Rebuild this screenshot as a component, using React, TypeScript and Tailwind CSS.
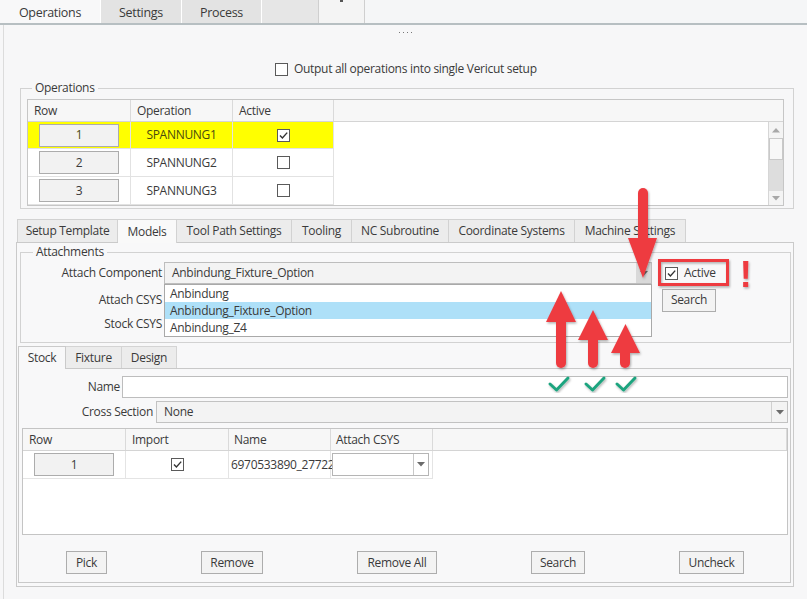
import React from "react";

type Kids = { children?: React.ReactNode };

function Checkbox({ checked = false }: { checked?: boolean }) {
  return (
    <span className="flex h-[13px] w-[13px] shrink-0 items-center justify-center border border-[#5a5a5a] bg-white">
      {checked && (
        <svg width="11" height="11" viewBox="0 0 11 11">
          <path d="M2 5.6 L4.4 8 L9.2 2.6" fill="none" stroke="#333" strokeWidth="1.4" />
        </svg>
      )}
    </span>
  );
}

function Caret() {
  return (
    <svg width="8" height="5" viewBox="0 0 8 5">
      <path d="M0 0 H8 L4 4.5 Z" fill="#6b6b6b" />
    </svg>
  );
}

function Btn({ children, className }: Kids & { className: string }) {
  return (
    <div className={`flex h-[23px] items-center justify-center border border-[#adadad] bg-[#f3f3f3] ${className}`}>
      {children}
    </div>
  );
}

function RowButton({ n }: { n: number }) {
  return (
    <div className="flex h-[23px] w-[80px] items-center justify-center border border-[#acacac] bg-[#f2f2f2]">
      {n}
    </div>
  );
}

function TopTabs() {
  return (
    <div className="flex h-[25px] border-b-2 border-[#b7bfc2] bg-[#f5f6f7] text-[12.5px]">
      <div className="flex w-[100px] items-center justify-center bg-[#f8f8f9] pt-[2px]">Operations</div>
      <div className="flex w-[81px] items-center justify-center border-l border-white bg-[#e3e3e3] pt-[2px]">Settings</div>
      <div className="flex w-[80px] items-center justify-center border-l border-white bg-[#e3e3e3] pt-[2px]">Process</div>
      <div className="w-[57px] border-l border-white bg-[#e6e6e6]" />
      <div className="flex w-[47px] justify-center border-x border-[#cfcfcf] bg-[#f4f4f4]">
        <span className="h-[2px] w-[3px] bg-[#555]" />
      </div>
    </div>
  );
}

function Scrollbar() {
  return (
    <div className="flex w-[15px] flex-col border-l border-[#d6d6d6] bg-[#f4f4f4]">
      <div className="flex h-[16px] items-center justify-center">
        <svg width="8" height="5" viewBox="0 0 8 5">
          <path d="M0 4.5 H8 L4 0 Z" fill="#a8a8a8" />
        </svg>
      </div>
      <div className="h-[22px] border border-[#c9c9c9] bg-[#f8f8f8]" />
      <div className="flex-1 bg-[#dddddd]" />
      <div className="flex h-[14px] items-center justify-center">
        <svg width="8" height="5" viewBox="0 0 8 5">
          <path d="M0 0 H8 L4 4.5 Z" fill="#a8a8a8" />
        </svg>
      </div>
    </div>
  );
}

const operations = [
  { n: 1, name: "SPANNUNG1", active: true },
  { n: 2, name: "SPANNUNG2", active: false },
  { n: 3, name: "SPANNUNG3", active: false },
];

function OperationsGroup() {
  return (
    <fieldset className="ml-[16px] mt-[3px] w-[774px] border border-[#d2d2d2] px-[6px] pb-[2px]">
      <legend className="ml-[5px] px-[3px] leading-[16px]">Operations</legend>
      <div className="mt-[3px] w-[757px] border border-[#c6c6c6] bg-white">
        <div className="flex h-[22px] border-b border-[#d4d4d4] bg-[#f7f7f7]">
          <div className="flex w-[103px] items-center border-r border-[#dadada] pl-[6px]">Row</div>
          <div className="flex w-[102px] items-center border-r border-[#dadada] pl-[6px]">Operation</div>
          <div className="flex w-[101px] items-center border-r border-[#dadada] pl-[6px]">Active</div>
          <div className="flex-1" />
        </div>
        <div className="flex">
          <div className="flex-1">
            {operations.map((op, i) => (
              <div
                key={op.n}
                className={`flex w-[306px] border-b border-[#e2e2e2] ${i === 0 ? "h-[27px] bg-[#ffff00] text-[#4a4a10]" : "h-[28px]"}`}
              >
                <div className="flex w-[103px] items-center justify-center border-r border-[#e2e2e2]">
                  <RowButton n={op.n} />
                </div>
                <div className="flex w-[102px] items-center justify-center border-r border-[#e2e2e2]">{op.name}</div>
                <div className="flex w-[101px] items-center justify-center border-r border-[#e2e2e2]">
                  <Checkbox checked={op.active} />
                </div>
              </div>
            ))}
          </div>
          <Scrollbar />
        </div>
      </div>
    </fieldset>
  );
}

const modelTabs = [
  { label: "Setup Template", w: "w-[101px]" },
  { label: "Models", w: "w-[59px]", on: true },
  { label: "Tool Path Settings", w: "w-[115px]" },
  { label: "Tooling", w: "w-[60px]" },
  { label: "NC Subroutine", w: "w-[97px]" },
  { label: "Coordinate Systems", w: "w-[126px]" },
  { label: "Machine Settings", w: "w-[111px]" },
];

function Combo({ value, className }: { value?: string; className: string }) {
  return (
    <div className={`flex h-[22px] border border-[#bdbdbd] bg-[#f3f3f3] ${className}`}>
      <div className="flex flex-1 items-center pl-[7px]">{value}</div>
      <div className="flex w-[15px] items-center justify-center bg-[#d9d9d9]">
        <Caret />
      </div>
    </div>
  );
}

function Attachments() {
  return (
    <fieldset className="ml-[3px] mt-[1px] w-[771px] border border-[#d2d2d2] pb-[7px]">
      <legend className="ml-[12px] px-[3px] leading-[16px]">Attachments</legend>
      <div className="mt-[2px] flex h-[22px] items-center">
        <div className="w-[141px] text-right">Attach Component</div>
        <div className="relative ml-[2px] w-[488px]">
          <Combo value="Anbindung_Fixture_Option" className="w-[488px]" />
          <div className="absolute left-0 top-[22px] z-10 w-[488px] border border-[#a9a9a9] bg-white">
            <div className="flex h-[17px] items-center pl-[5px]">Anbindung</div>
            <div className="flex h-[17px] items-center bg-[#aee0f8] pl-[5px]">Anbindung_Fixture_Option</div>
            <div className="flex h-[17px] items-center pl-[5px]">Anbindung_Z4</div>
          </div>
        </div>
        <div className="ml-[13px]">
          <Checkbox checked />
        </div>
        <span className="ml-[6px]">Active</span>
      </div>
      <div className="mt-[5px] flex h-[22px] items-center">
        <div className="w-[141px] text-right">Attach CSYS</div>
        <Combo className="ml-[2px] w-[488px]" />
        <Btn className="ml-[10px] w-[54px]">Search</Btn>
      </div>
      <div className="mt-[2px] flex h-[22px] items-center">
        <div className="w-[141px] text-right">Stock CSYS</div>
        <Combo className="ml-[2px] w-[488px]" />
      </div>
    </fieldset>
  );
}

function StockPanel() {
  return (
    <div className="mt-[3px]">
      <div className="ml-[1px] flex h-[22px]">
        <div className="relative z-10 -mb-px flex h-[23px] w-[48px] items-center justify-center border-x border-t border-[#cacaca] bg-[#f8f8f9]">Stock</div>
        <div className="flex w-[56px] items-center justify-center border-r border-t border-[#d4d4d4] bg-[#ececec]">Fixture</div>
        <div className="flex w-[55px] items-center justify-center border-r border-t border-[#d4d4d4] bg-[#ececec]">Design</div>
      </div>
      <div className="ml-[1px] h-[215px] w-[773px] border border-[#c9c9c9] bg-[#f8f8f9]">
        <div className="mt-[7px] flex h-[22px] items-center">
          <div className="w-[101px] text-right">Name</div>
          <div className="ml-[2px] h-[22px] w-[666px] border border-[#bdbdbd] bg-white" />
        </div>
        <div className="mt-[3px] flex h-[22px] items-center">
          <div className="w-[134px] text-right">Cross Section</div>
          <div className="ml-[3px] flex h-[22px] w-[632px] border border-[#c2c2c2] bg-[#f3f3f3]">
            <div className="flex flex-1 items-center pl-[7px]">None</div>
            <div className="flex w-[16px] items-center justify-center border-l border-[#d0d0d0]">
              <Caret />
            </div>
          </div>
        </div>
        <div className="ml-[3px] mt-[5px] h-[107px] w-[766px] border border-[#c4c4c4] bg-white">
          <div className="flex h-[22px] border-b border-[#d4d4d4] bg-[#f7f7f7]">
            <div className="flex w-[103px] items-center border-r border-[#dadada] pl-[6px]">Row</div>
            <div className="flex w-[103px] items-center border-r border-[#dadada] pl-[6px]">Import</div>
            <div className="flex w-[102px] items-center border-r border-[#dadada] pl-[5px]">Name</div>
            <div className="flex w-[102px] items-center border-r border-[#dadada] pl-[5px]">Attach CSYS</div>
            <div className="flex-1 border-r border-[#dadada]" />
          </div>
          <div className="flex h-[28px] w-[410px] border-b border-[#e4e4e4]">
            <div className="flex w-[103px] items-center justify-center border-r border-[#e4e4e4]">
              <RowButton n={1} />
            </div>
            <div className="flex w-[103px] items-center justify-center border-r border-[#e4e4e4]">
              <Checkbox checked />
            </div>
            <div className="flex w-[102px] items-center whitespace-nowrap border-r border-[#e4e4e4] pl-[2px]">
              6970533890_27722
            </div>
            <div className="flex w-[102px] items-center border-r border-[#e4e4e4] pl-[1px]">
              <div className="flex h-[23px] w-[97px] border border-[#b5b5b5] bg-white">
                <div className="flex-1" />
                <div className="flex w-[15px] items-center justify-center border-l border-[#c8c8c8]">
                  <Caret />
                </div>
              </div>
            </div>
          </div>
        </div>
        <div className="mt-[16px] flex gap-[94px] pl-[47px]">
          <Btn className="w-[41px]">Pick</Btn>
          <Btn className="w-[62px]">Remove</Btn>
          <Btn className="w-[80px]">Remove All</Btn>
          <Btn className="w-[54px]">Search</Btn>
          <Btn className="w-[65px]">Uncheck</Btn>
        </div>
      </div>
    </div>
  );
}

function ModelsPanel() {
  return (
    <div className="ml-[13px] mt-[10px]">
      <div className="flex h-[23px]">
        {modelTabs.map((t) => (
          <div
            key={t.label}
            className={`flex ${t.w} items-center justify-center border-r border-t border-[#d2d2d2] first:border-l ${t.on ? "relative z-10 -mb-px h-[24px] bg-[#f9f9f9]" : "bg-[#ececec]"}`}
          >
            {t.label}
          </div>
        ))}
      </div>
      <div className="-ml-px h-[345px] w-[778px] border border-[#cacaca] bg-[#f8f8f9]">
        <Attachments />
        <StockPanel />
      </div>
    </div>
  );
}

function Annotations() {
  const red = "#ee3b41";
  const green = "#1fa47f";
  return (
    <svg className="pointer-events-none absolute left-0 top-0 z-50" width="807" height="599" viewBox="0 0 807 599">
      <defs>
        <filter id="sh" x="-20%" y="-20%" width="140%" height="140%">
          <feDropShadow dx="1" dy="1.5" stdDeviation="1.2" floodColor="#000" floodOpacity="0.3" />
        </filter>
      </defs>
      <g fill={red} filter="url(#sh)">
        <rect x="638" y="188" width="10" height="56" rx="5" />
        <polygon points="628,238 657,238 643,278" />
        <rect x="556" y="316" width="10" height="52" rx="5" />
        <polygon points="546,322 576,322 561,291" />
        <rect x="588" y="334" width="10" height="34" rx="5" />
        <polygon points="578,340 608,340 593,310" />
        <rect x="620" y="348" width="10" height="20" rx="5" />
        <polygon points="611,353 640,353 625.5,324" />
      </g>
      <rect x="659.5" y="260.5" width="68" height="24" fill="none" stroke={red} strokeWidth="3" filter="url(#sh)" />
      <text
        x="745.5"
        y="287"
        textAnchor="middle"
        fontFamily="Liberation Sans, sans-serif"
        fontWeight="bold"
        fontSize="36"
        fill={red}
        filter="url(#sh)"
      >
        !
      </text>
      <g fill="none" stroke={green} strokeWidth="3" strokeLinecap="round" strokeLinejoin="round" filter="url(#sh)">
        <polyline points="550,384 556.5,390 568,378" />
        <polyline points="586,384 592.5,390 604,378" />
        <polyline points="617,384 623.5,390 635,378" />
      </g>
    </svg>
  );
}

export default function App() {
  return (
    <div className="relative h-[599px] w-[807px] overflow-hidden bg-[#f7f7f8] font-['Open_Sans',sans-serif] text-[12px] leading-[16px] tracking-[-0.3px] text-[#3a3a3a]">
      <TopTabs />
      <div className="ml-[3px] flex h-[574px] flex-col border-l border-[#dcdcdc]">
        <div className="flex h-[14px] items-center justify-center gap-[3px]">
          <span className="h-px w-px bg-[#777]" />
          <span className="h-px w-px bg-[#777]" />
          <span className="h-px w-px bg-[#777]" />
          <span className="h-px w-px bg-[#777]" />
        </div>
        <div className="mt-[22px] flex h-[16px] items-center gap-[6px] pl-[271px]">
          <Checkbox />
          <span>Output all operations into single Vericut setup</span>
        </div>
        <OperationsGroup />
        <ModelsPanel />
      </div>
      <Annotations />
    </div>
  );
}
